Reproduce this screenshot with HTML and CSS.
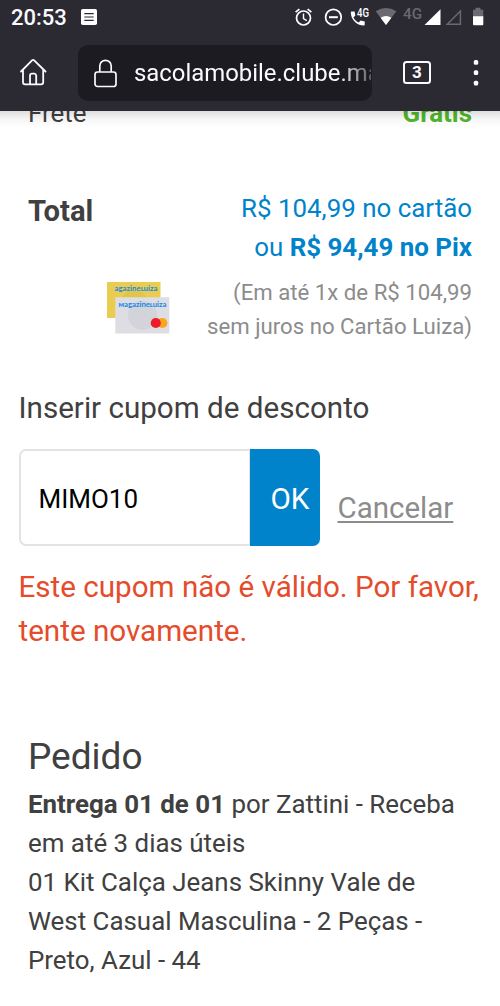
FILE: index.html
```html
<!DOCTYPE html>
<html lang="pt-BR">
<head>
<meta charset="utf-8">
<title>Sacola</title>
<link rel="stylesheet" href="styles.css">
</head>
<body>
<header class="chrome">
  <div class="status">
    <span class="clock">20:53</span>
    <svg class="note" width="16" height="16" viewBox="0 0 16 16"><rect width="16" height="16" rx="1.8" fill="#fff"/><path d="M3.3 4.7h9.4M3.3 8h9.400M3.300 11.300h9.400" stroke="#2b2a33" stroke-width="1.200"/></svg>
    <svg class="signals" width="200" height="35" viewBox="0 0 200 35">
      <g fill="none" stroke="#fff" stroke-width="1.700">
        <circle cx="3.500" cy="18" r="7"/><path d="M3.500 13.500v5l3.300 2.100" stroke-width="1.400"/><path d="M-4.400 12.200l3.800-3.100M7.600 9.100l3.800 3.100"/>
        <circle cx="33.400" cy="17.200" r="7.800"/><path d="M29 17.200h8.800" stroke-width="2"/>
      </g>
      <path d="M51.600 11.500h3c.3 1.600.4 2.500.8 3.900l-2 2c1.300 2.400 3 4 5.300 5.200l2-2 4 .9v3.300c0 .5-.3.8-.8.8-7.500-.2-13-6-13.100-13.300 0-.5.3-.8.8-.8z" fill="#fff"/>
      <text x="57" y="17" class="call-net" textLength="12" lengthAdjust="spacingAndGlyphs">4G</text>
      <path d="M75.700 11.300Q86 4.700 96.300 11.300L86 25z" fill="#6b6a70"/>
      <path d="M80.600 17.800Q86 14.400 91.400 17.800L86 25z" fill="#fff"/>
      <text x="103" y="18.500" class="cell-net" textLength="19" lengthAdjust="spacingAndGlyphs">4G</text>
      <path d="M124.500 25L140.500 9.200V25z" fill="#fff"/>
      <path d="M147.300 24.300L160.400 11V24.300z" fill="none" stroke="#69686f" stroke-width="1.500"/>
      <path d="M173 9.700h2.500V7.800h5v1.900h2.800V17H173z" fill="#6b6a70"/><path d="M173 16.300h10.300v8q0 1-1 1H174q-1 0-1-1z" fill="#fff"/>
    </svg>
  </div>
  <div class="toolbar">
    <svg class="home" width="28" height="28" viewBox="0 0 28 28" fill="none" stroke="#fbfbfe" stroke-width="1.800" stroke-linecap="round" stroke-linejoin="round"><path d="M2 13.500L13.300 2.200a1.200 1.200 0 0 1 1.600 0L26.500 13.500M4 11.700v12.600a2 2 0 0 0 2 2h16.200a2 2 0 0 0 2-2V11.700M11 26.300v-8.600a2 2 0 0 1 2-2h2.200a2 2 0 0 1 2 2v8.600"/></svg>
    <div class="address">
      <svg class="lock" width="23" height="29" viewBox="0 0 23 29" fill="none" stroke="#fbfbfe" stroke-width="1.700"><rect x="1" y="13" width="21" height="14.500" rx="2.500"/><path d="M5.800 13V7a5.700 5.700 0 0 1 11.400 0v6"/></svg>
      <span class="url">sacolamobile.clube.magazineluiza</span>
    </div>
    <span class="tabs">3</span>
    <svg class="more" width="6" height="26" viewBox="0 0 6 26" fill="#fbfbfe"><rect x=".8" y="0" width="4.400" height="4.800" rx="1.500"/><rect x=".8" y="10.300" width="4.400" height="4.800" rx="1.500"/><rect x=".8" y="20.700" width="4.400" height="4.800" rx="1.500"/></svg>
  </div>
</header>
<main class="page">
  <div class="row shipping"><span>Frete</span><b class="free">Grátis</b></div>
  <section class="row total">
    <strong class="total-label">Total</strong>
    <div class="price"><div class="card-price">R$ 104,99 no cartão</div><div class="pix">ou <b>R$ 94,49 no Pix</b></div></div>
  </section>
  <section class="installments">
    <svg class="cards" width="63" height="52" viewBox="0 0 63 52">
      <path d="M0 0h53.500v36H0z" fill="#eacd4e"/><circle cx="27" cy="22" r="14" fill="#e1c549"/>
      <text x="7.500" y="8.500" class="brand" textLength="43" lengthAdjust="spacingAndGlyphs">agazineʟuiza</text>
      <path d="M8.300 15.200h54V51.500h-54z" fill="#dedde3"/><circle cx="35.500" cy="33.300" r="14.500" fill="#d3d3da"/>
      <text x="11.500" y="25.200" class="brand" textLength="48" lengthAdjust="spacingAndGlyphs">ᴍagazineʟuiza</text>
      <circle cx="55.300" cy="41" r="5.100" fill="#faa51b"/><circle cx="48.800" cy="41" r="5.100" fill="#ed1c2b"/>
    </svg>
    <div class="terms"><div class="term-first">(Em até 1x de R$ 104,99</div><div class="term-second">sem juros no Cartão Luiza)</div></div>
  </section>
  <section class="coupon">
    <div class="coupon-title">Inserir cupom de desconto</div>
    <div class="coupon-form">
      <div class="field"><span>MIMO10</span></div>
      <div class="ok"><span>OK</span></div>
      <a class="cancel">Cancelar</a>
    </div>
    <div class="error"><div class="error-first">Este cupom não é válido. Por favor,</div><div class="error-second">tente novamente.</div></div>
  </section>
  <section class="order">
    <h2>Pedido</h2>
    <div><b>Entrega 01 de 01</b> por Zattini - Receba</div>
    <div>em até 3 dias úteis</div>
    <div>01 Kit Calça Jeans Skinny Vale de</div>
    <div>West Casual Masculina - 2 Peças -</div>
    <div>Preto, Azul - 44</div>
  </section>
</main>
</body>
</html>
```
FILE: styles.css
```css
* { box-sizing: border-box; }
body {
  margin: 0;
  width: 500px;
  height: 1006px;
  overflow: hidden;
  background: #fff;
  color: #404040;
  font: 25.900px/39px Roboto, sans-serif;
  white-space: nowrap;
}
svg { display: block; flex: none; overflow: visible; }
.chrome { height: 111px; background: #2b2a33; color: #fbfbfe; }
.status { display: flex; height: 35px; }
.clock { width: 56px; margin-left: 11px; font-size: 22px; line-height: 35px; font-weight: 500; }
.note { margin: 9px 0 0 14px; }
.signals { margin-left: 203px; }
.call-net { font: 500 12px Roboto, sans-serif; fill: #fff; }
.cell-net { font: 500 15px Roboto, sans-serif; fill: #69686f; }
.toolbar { display: flex; height: 76px; align-items: flex-start; }
.home { margin: 23px 0 0 19px; }
.address {
  display: flex;
  width: 294px;
  height: 56px;
  margin: 10px 0 0 31px;
  padding-left: 16px;
  border-radius: 10px;
  background: #1c1b22;
  overflow: hidden;
}
.lock { margin-top: 14px; }
.url {
  width: 237px;
  margin-left: 17px;
  overflow: hidden;
  font-size: 23.900px;
  line-height: 57px;
  mask-image: linear-gradient(90deg, #000 205px, transparent 250px);
}
.tabs {
  width: 28px;
  height: 23px;
  margin: 26px 0 0 31px;
  border: 2px solid #fbfbfe;
  border-radius: 3.500px;
  text-align: center;
  font-size: 17px;
  line-height: 19px;
  font-weight: 700;
}
.more { margin: 25px 0 0 42px; }
.page { position: relative; height: 895px; overflow: hidden; }
.page::before {
  content: "";
  position: absolute;
  inset: 0 0 auto;
  height: 16px;
  background: linear-gradient(rgba(0, 0, 0, .13), rgba(0, 0, 0, .04) 50%, transparent);
}
.row { display: flex; justify-content: space-between; padding: 0 28px; }
.shipping { margin-top: -17px; }
.free { color: #50b82a; }
.total { margin-top: 56px; }
.total-label { padding-top: 3px; font-size: 29.200px; }
.price { color: #0083ca; text-align: right; }
.installments { display: flex; justify-content: space-between; margin-top: 9px; padding: 0 28px 0 107px; }
.cards { margin-top: 6px; }
.brand { font: 700 7.500px Lato, "DejaVu Sans", sans-serif; fill: #1389e5; }
.terms { color: #8c8c8c; font-size: 22.200px; line-height: 33.700px; text-align: right; }
.coupon { padding-left: 18.500px; margin-top: 43px; font-size: 29.600px; line-height: 44.500px; }
.coupon-form { display: flex; height: 97px; margin-top: 18px; }
.field {
  width: 231px;
  padding: 2px 0 0 18px;
  border: 2px solid #e3e3e3;
  border-right-width: 1px;
  border-radius: 7px 0 0 7px;
  color: #000;
  font-size: 26px;
  line-height: 93px;
}
.ok { width: 70px; padding: 2px 0 0 21px; border-radius: 0 7px 7px 0; background: #0083ca; color: #fff; line-height: 97px; }
.cancel { margin: 37px 0 0 18px; color: #8c8c8c; font-size: 29.500px; text-decoration: underline; text-decoration-thickness: 1.500px; text-underline-offset: 3px; }
.error { margin-top: 19px; color: #e44c2c; }
.order { margin-top: 75px; padding-left: 28px; }
.order h2 { margin: 0; font-size: 37px; line-height: 56px; font-weight: 400; }
```
